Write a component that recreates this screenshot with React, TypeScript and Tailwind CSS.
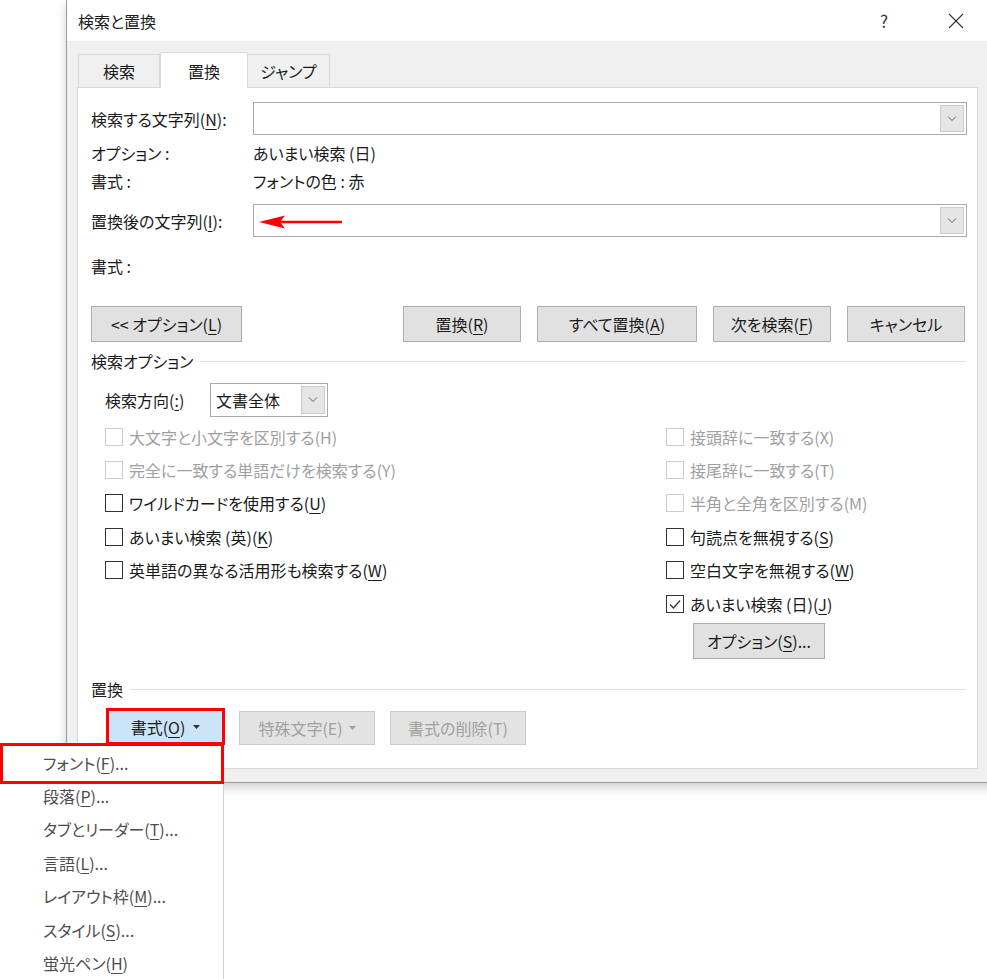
import React from 'react'

const FONT = "font-['Noto_Sans_CJK_JP','Noto_Sans',sans-serif] [font-feature-settings:'palt']"

function Mn({ pre, k, post = '' }: { pre: string; k: string; post?: string }) {
  return (
    <span>
      {pre}
      <span className="underline underline-offset-[3px] decoration-1">{k}</span>
      {post}
    </span>
  )
}

function Chevron() {
  return (
    <svg width="10" height="6" viewBox="0 0 10 6" fill="none">
      <polyline points="1,0.5 5,4.5 9,0.5" stroke="#606060" strokeWidth="1" />
    </svg>
  )
}

function DropButton() {
  return (
    <div className="w-[24px] h-full bg-[#e5e5e5] border border-[#cccccc] flex items-center justify-center">
      <Chevron />
    </div>
  )
}

function Checkbox({ checked = false, disabled = false }: { checked?: boolean; disabled?: boolean }) {
  return (
    <div
      className={`w-[18px] h-[18px] shrink-0 bg-white border flex items-center justify-center ${
        disabled ? 'border-[#cccccc]' : 'border-[#333333]'
      }`}
    >
      {checked && (
        <svg width="14" height="14" viewBox="0 0 14 14" fill="none">
          <polyline points="2,7.5 5.5,11 12,3.5" stroke="#333333" strokeWidth="1.3" />
        </svg>
      )}
    </div>
  )
}

function CheckRow({
  label,
  checked,
  disabled,
}: {
  label: React.ReactNode
  checked?: boolean
  disabled?: boolean
}) {
  return (
    <div className="h-[33.4px] flex items-center gap-[6px]">
      <Checkbox checked={checked} disabled={disabled} />
      <span className={disabled ? 'text-[#a0a0a0]' : 'text-[#1a1a1a]'}>{label}</span>
    </div>
  )
}

function Button({
  children,
  className = '',
}: {
  children: React.ReactNode
  className?: string
}) {
  return (
    <div
      className={`h-[36px] bg-[#e1e1e1] border border-[#adadad] flex items-center justify-center text-[#1a1a1a] ${className}`}
    >
      {children}
    </div>
  )
}

function GroupLabel({ text, className = '' }: { text: string; className?: string }) {
  return (
    <div className={`h-[18px] flex items-center gap-[7px] ${className}`}>
      <span className="text-[#1a1a1a]">{text}</span>
      <div className="flex-1 h-px bg-[#dcdcdc] mr-[1px]" />
    </div>
  )
}

const MENU = [
  { pre: 'フォント(', k: 'F', post: ')...' },
  { pre: '段落(', k: 'P', post: ')...' },
  { pre: 'タブとリーダー(', k: 'T', post: ')...' },
  { pre: '言語(', k: 'L', post: ')...' },
  { pre: 'レイアウト枠(', k: 'M', post: ')...' },
  { pre: 'スタイル(', k: 'S', post: ')...' },
  { pre: '蛍光ペン(', k: 'H', post: ')' },
]

export default function App() {
  return (
    <div className={`relative w-[987px] h-[979px] overflow-hidden bg-white text-[16px] leading-none ${FONT}`}>
      {/* Dialog */}
      <div className="ml-[66px] w-[940px] h-[783px] bg-[#f0f0f0] border-l border-b border-[#9a9a9a] shadow-[0_5px_10px_rgba(0,0,0,0.18)]">
        {/* Title bar */}
        <div className="h-[41px] bg-white flex items-center pl-[11px]">
          <span className="text-[#1a1a1a] text-[16px]">検索と置換</span>
          <span className="ml-auto text-[17px] text-[#333] mr-[60px]">?</span>
          <svg width="16" height="16" viewBox="0 0 16 16" className="mr-[42px]">
            <line x1="1" y1="1" x2="15" y2="15" stroke="#333" strokeWidth="1.1" />
            <line x1="15" y1="1" x2="1" y2="15" stroke="#333" strokeWidth="1.1" />
          </svg>
        </div>

        {/* Tabs */}
        <div className="pt-[11px] pl-[11px]">
          <div className="relative z-10 -mb-px flex items-end h-[36px]">
            <div className="mb-px w-[82px] h-[33px] border border-b-0 border-[#d9d9d9] flex items-center justify-center text-[#1a1a1a]">
              検索
            </div>
            <div className="w-[88px] h-[36px] bg-white border border-b-0 border-[#d9d9d9] flex items-center justify-center text-[#1a1a1a]">
              置換
            </div>
            <div className="mb-px w-[82px] h-[33px] border border-b-0 border-l-0 border-[#d9d9d9] flex items-center justify-center text-[#1a1a1a]">
              ジャンプ
            </div>
          </div>
        </div>

        {/* Panel */}
        <div className="ml-[10px] w-[901px] h-[682px] bg-white border border-[#d9d9d9] pl-[13px] pr-[10px] pt-[14px] text-[#1a1a1a]">
          {/* Find */}
          <div className="flex items-center h-[33px]">
            <div className="w-[162px]">
              <Mn pre="検索する文字列(" k="N" post="):" />
            </div>
            <div className="flex-1 h-full border border-[#aaaaaa] flex justify-end p-[2px]">
              <DropButton />
            </div>
          </div>
          <div className="mt-[4px] h-[28px] flex items-center">
            <div className="w-[162px]">オプション :</div>
            <div>あいまい検索 (日)</div>
          </div>
          <div className="h-[28px] flex items-center">
            <div className="w-[162px]">書式 :</div>
            <div>フォントの色 : 赤</div>
          </div>

          {/* Replace */}
          <div className="mt-[9px] flex items-center h-[33px]">
            <div className="w-[162px]">
              <Mn pre="置換後の文字列(" k="I" post="):" />
            </div>
            <div className="relative flex-1 h-full border border-[#aaaaaa] flex justify-end p-[2px]">
              <svg
                width="90"
                height="20"
                viewBox="0 0 90 20"
                className="absolute left-[4px] top-[7px]"
              >
                <polygon points="1,10 27,3.5 22,10 27,16.5" fill="#ff0000" />
                <line x1="22" y1="10" x2="84" y2="10" stroke="#ff0000" strokeWidth="2.5" />
              </svg>
              <DropButton />
            </div>
          </div>
          <div className="mt-[16px] h-[26px] flex items-center">書式 :</div>

          {/* Buttons */}
          <div className="mt-[27px] flex items-center">
            <Button className="w-[151px]">
              <Mn pre="<< オプション(" k="L" post=")" />
            </Button>
            <div className="ml-auto mr-[2px] flex gap-[16px]">
              <Button className="w-[118px]">
                <Mn pre="置換(" k="R" post=")" />
              </Button>
              <Button className="w-[160px]">
                <Mn pre="すべて置換(" k="A" post=")" />
              </Button>
              <Button className="w-[118px]">
                <Mn pre="次を検索(" k="F" post=")" />
              </Button>
              <Button className="w-[118px]">キャンセル</Button>
            </div>
          </div>

          {/* Search options */}
          <GroupLabel text="検索オプション" className="mt-[10px]" />
          <div className="mt-[13px] pl-[14px] flex items-center h-[34px]">
            <div className="w-[105px]">
              <Mn pre="検索方向(" k=":" post=")" />
            </div>
            <div className="w-[118px] h-full border border-[#aaaaaa] flex items-center p-[2px]">
              <span className="pl-[3px]">文書全体</span>
              <div className="ml-auto h-full">
                <DropButton />
              </div>
            </div>
          </div>

          <div className="mt-[3px] pl-[14px] flex">
            <div className="w-[561px] flex flex-col">
              <CheckRow disabled label="大文字と小文字を区別する(H)" />
              <CheckRow disabled label="完全に一致する単語だけを検索する(Y)" />
              <CheckRow label={<Mn pre="ワイルドカードを使用する(" k="U" post=")" />} />
              <CheckRow label={<Mn pre="あいまい検索 (英)(" k="K" post=")" />} />
              <CheckRow label={<Mn pre="英単語の異なる活用形も検索する(" k="W" post=")" />} />
            </div>
            <div className="flex flex-col">
              <CheckRow disabled label="接頭辞に一致する(X)" />
              <CheckRow disabled label="接尾辞に一致する(T)" />
              <CheckRow disabled label="半角と全角を区別する(M)" />
              <CheckRow label={<Mn pre="句読点を無視する(" k="S" post=")" />} />
              <CheckRow label={<Mn pre="空白文字を無視する(" k="W" post=")" />} />
              <CheckRow checked label={<Mn pre="あいまい検索 (日)(" k="J" post=")" />} />
              <Button className="mt-[3px] ml-[27px] w-[132px]">
                <Mn pre="オプション(" k="S" post=")..." />
              </Button>
            </div>
          </div>

          {/* Replace group */}
          <GroupLabel text="置換" className="mt-[21px]" />
          <div className="mt-[10px] pl-[15px] flex items-end h-[37px]">
            <div className="w-[119px] h-[37px] bg-[#cce4f7] border-[3px] border-[#ff0000] flex items-center justify-center gap-[8px] text-[#1a1a1a]">
              <Mn pre="書式(" k="O" post=")" />
              <svg width="7" height="4" viewBox="0 0 7 4">
                <polygon points="0,0 7,0 3.5,4" fill="#333" />
              </svg>
            </div>
            <div className="ml-[14px] w-[136px] h-[34px] bg-[#e3e3e3] border border-[#cccccc] flex items-center justify-center gap-[6px] text-[#a0a0a0]">
              <span>特殊文字(E)</span>
              <svg width="7" height="4" viewBox="0 0 7 4">
                <polygon points="0,0 7,0 3.5,4" fill="#a0a0a0" />
              </svg>
            </div>
            <div className="ml-[15px] w-[136px] h-[34px] bg-[#e3e3e3] border border-[#cccccc] flex items-center justify-center text-[#a0a0a0]">
              書式の削除(T)
            </div>
          </div>
        </div>
      </div>

      {/* Dropdown menu */}
      <div className="absolute left-0 top-[745px] w-[224px] h-[240px] bg-white border-r border-[#d0d0d0] pt-px text-[#4d4d4d]">
        {MENU.map((m) => (
          <div key={m.pre} className="h-[33.4px] flex items-center pl-[43px]">
            <Mn pre={m.pre} k={m.k} post={m.post} />
          </div>
        ))}
      </div>
      <div className="absolute left-0 top-[743px] w-[224px] h-[41px] border-[3px] border-[#ff0000]" />
    </div>
  )
}
